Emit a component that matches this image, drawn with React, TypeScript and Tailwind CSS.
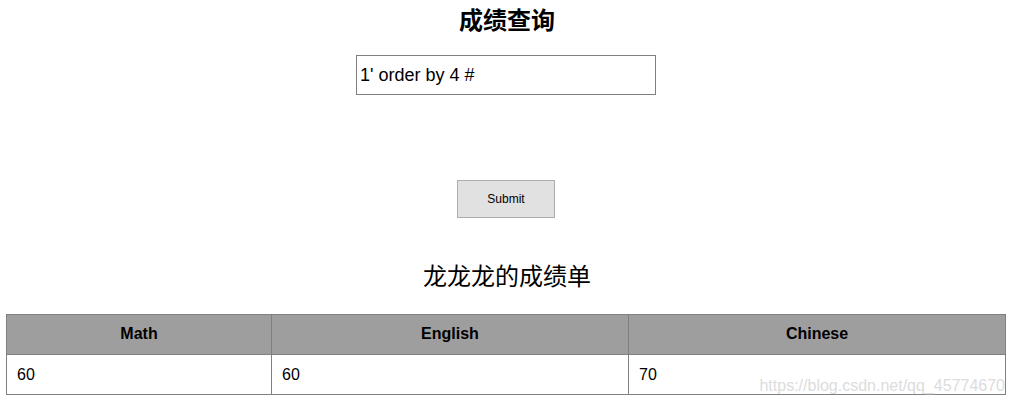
export default function App() {
    return (
        <div className="relative w-[1014px] h-[403px] bg-white overflow-hidden font-['Liberation_Sans','Noto_Sans_CJK_SC',sans-serif] text-black">
            {/* title */}
            <h1 className="text-center text-[24px] font-bold leading-[30px] pt-[6px]">成绩查询</h1>

            {/* form */}
            <form className="flex flex-col items-center pr-[2px]" onSubmit={(e) => e.preventDefault()}>
                <input
                    type="text"
                    defaultValue="1' order by 4 #"
                    className="mt-[19px] w-[300px] h-[40px] border border-[#808080] px-[3px] text-[18px] outline-none"
                />
                <button
                    type="submit"
                    className="mt-[85px] w-[98px] h-[38px] bg-[#e1e1e1] border border-[#adadad] text-[12px]"
                >
                    Submit
                </button>
            </form>

            {/* score table */}
            <h2 className="text-center text-[24px] leading-[32px] mt-[43px]">龙龙龙的成绩单</h2>
            <table className="ml-[6px] mt-[21px] w-[1000px] border-collapse text-[16px]">
                <thead>
                    <tr className="bg-[#9e9e9e] h-[40px]">
                        <th className="w-[265px] border border-[#808080] font-bold pb-[2px]">Math</th>
                        <th className="w-[357px] border border-[#808080] font-bold pb-[2px]">English</th>
                        <th className="border border-[#808080] font-bold pb-[2px]">Chinese</th>
                    </tr>
                </thead>
                <tbody>
                    <tr className="h-[40px]">
                        <td className="border border-[#808080] pl-[10px]">60</td>
                        <td className="border border-[#808080] pl-[10px]">60</td>
                        <td className="border border-[#808080] pl-[10px]">70</td>
                    </tr>
                </tbody>
            </table>

            {/* watermark */}
            <div className="absolute right-[9px] top-[374px] text-[16px] text-[#dcdcdc]">https://blog.csdn.net/qq_45774670</div>
        </div>
    );
}
